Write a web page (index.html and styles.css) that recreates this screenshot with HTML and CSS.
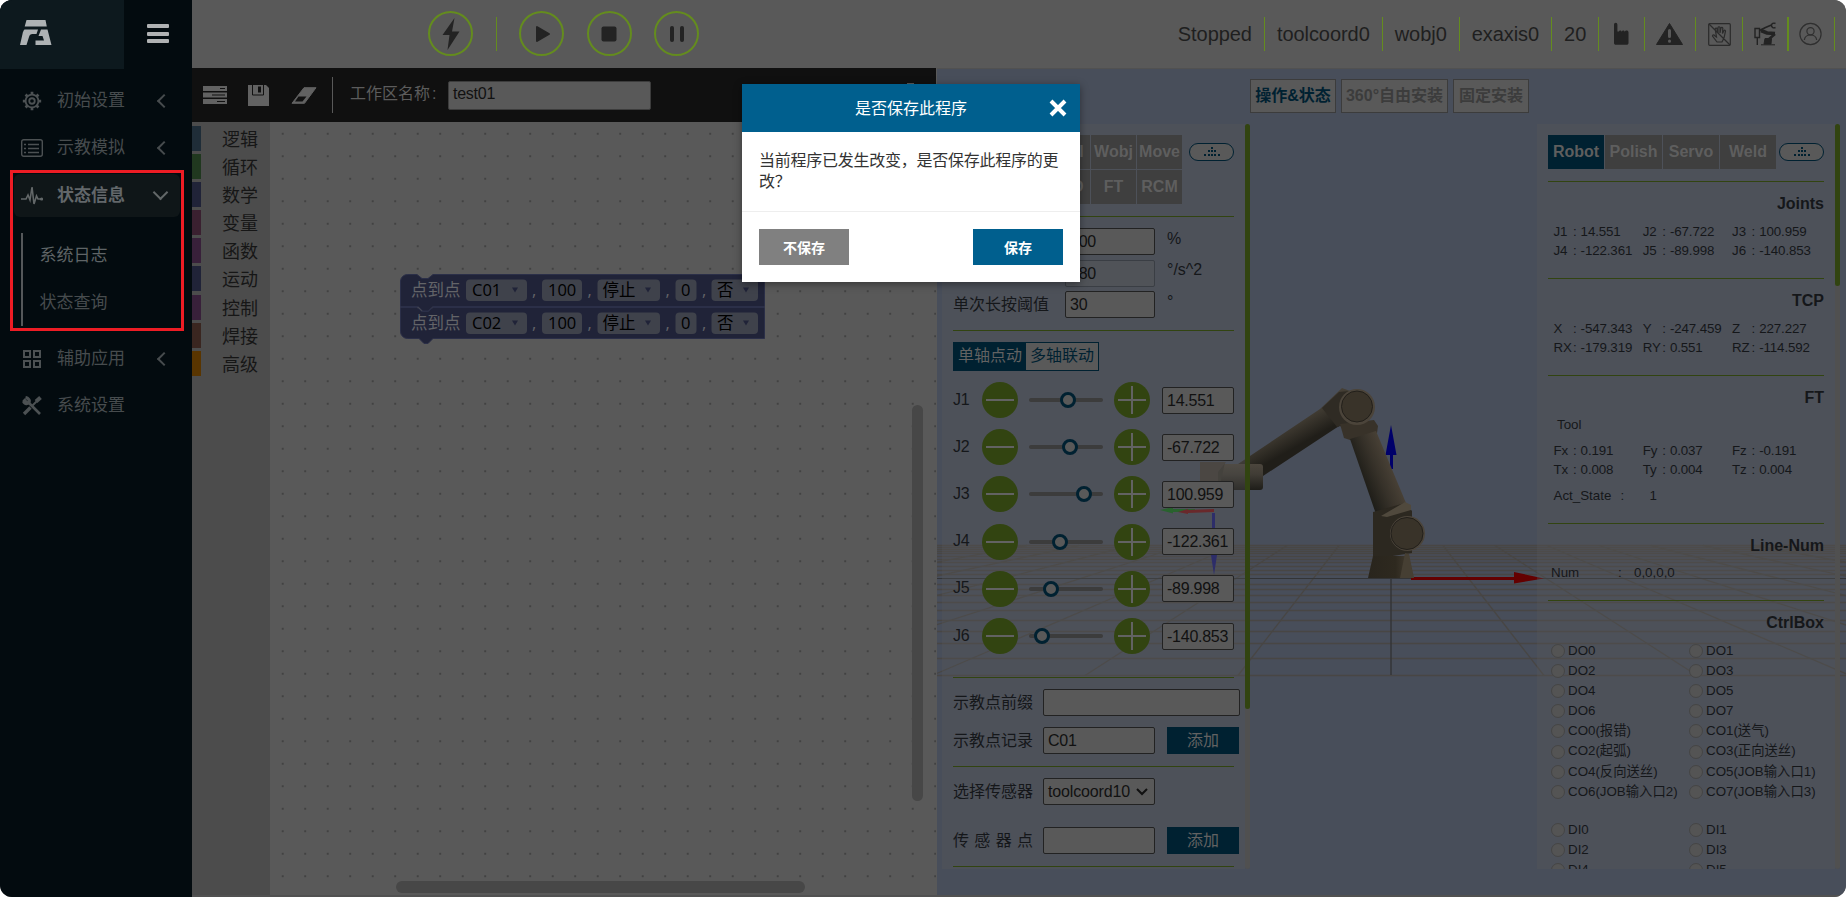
FILE: index.html
```
<!DOCTYPE html>
<html lang="zh-CN">
<head>
<meta charset="utf-8">
<title>test01</title>
<link rel="stylesheet" href="styles.css">
</head>
<body>
<div class="app">
  <aside class="sidebar">
    <div class="brand">
      <div class="logo"><svg width="32" height="26" viewBox="0 0 32 26" fill="#aeb2b4"><path d="M6.500 0h19l1.300 6.500H4.700zM4.500 9.500h13.500l-1.500 4.500h-4c-2 0-3 1-3.500 3L6.500 25H0l2.500-11c.4-2 1-3.500 2-4.500zM21 9.500h6.500L31.500 25H15.500v-4.500H24l-1.500-4.500h-4z"/></svg></div>
      <div class="burger"><i></i><i></i><i></i></div>
    </div>
    <nav class="menu">
      <div class="item"><svg width="22" height="22" viewBox="0 0 24 24" fill="none" stroke="#4c5153" stroke-width="2"><circle cx="12" cy="12" r="7"/><circle cx="12" cy="12" r="3"/><path stroke-width="3" d="M12 2v3M12 19v3M2 12h3M19 12h3M5 5l2 2M17 17l2 2M5 19l2-2M17 7l2-2"/></svg><span>初始设置</span><b class="chev"></b></div>
      <div class="item"><svg width="22" height="18" viewBox="0 0 22 18" fill="none" stroke="#4c5153" stroke-width="1.400"><rect x="0.700" y="0.700" width="20.600" height="16.600" rx="2"/><path d="M3 5.500h2M7 5.500h11M3 9.500h2M7 9.500h11M3 13.500h2M7 13.500h11"/></svg><span>示教模拟</span><b class="chev"></b></div>
      <div class="item active"><svg width="22" height="20" viewBox="0 0 22 20" fill="none" stroke="#626768" stroke-width="1.600"><path d="M0 13h5l2-4 2 5 2-13 2 17 2.500-8 1.500 3h4"/><circle cx="20.500" cy="13" r="0.800"/></svg><span>状态信息</span><b class="chev down"></b></div>
      <div class="sub"><div class="on">系统日志</div><div>状态查询</div></div>
      <div class="item"><svg width="20" height="20" viewBox="0 0 20 20" fill="none" stroke="#4c5153" stroke-width="2"><path d="M2 2h6v6H2zM12 2h6v6h-6zM2 12h6v6H2zM12 12h6v6h-6z"/></svg><span>辅助应用</span><b class="chev"></b></div>
      <div class="item"><svg width="20" height="20" viewBox="0 0 20 20" fill="none" stroke="#4c5153"><path stroke-width="2.600" d="M6 6l12 12"/><path stroke-width="3.200" d="M1.500 3.500l3 3M3.500 1.500C6 2 8 4 7 6S3 8.500 1.500 5"/><path stroke-width="2" d="M10.500 9.500L17 3"/><path stroke-width="4" d="M14 5.500l4.500-4"/><path stroke-width="3.400" d="M8.500 11.500L2 18"/></svg><span>系统设置</span></div>
    </nav>
  </aside>

  <div class="main">
    <header class="topbar">
      <div class="run">
        <div class="round"><svg width="20" height="34" viewBox="0 0 20 34" fill="#232323"><path d="M13.500 1L1.500 18h7L6.500 33l12-18.500h-7.500z"/></svg></div>
        <i class="sep"></i>
        <div class="round play"><svg width="20" height="20" viewBox="0 0 20 20" fill="#232323" stroke="#232323" stroke-width="2" stroke-linejoin="round"><path d="M5 3v14l12-7z"/></svg></div>
        <div class="round"><svg width="16" height="16"><rect width="15" height="15" x="0.500" y="0.500" rx="2" fill="#232323"/></svg></div>
        <div class="round"><svg width="16" height="18" fill="#232323"><rect x="1" y="1" width="4" height="16" rx="2"/><rect x="11" y="1" width="4" height="16" rx="2"/></svg></div>
      </div>
      <div class="status">
        <div>Stopped</div><div>toolcoord0</div><div>wobj0</div><div>exaxis0</div><div>20</div>
        <div class="ic w46"><svg width="18" height="24" viewBox="0 0 18 24" fill="#232323"><path d="M1 2.500a1.700 1.700 0 013.400 0V9.500H6c.2-1.300 2.300-1.300 2.500 0H9c.2-1.300 2.300-1.300 2.500 0h.5c.3-1.300 3.500-1.300 3.500.8V21c0 1-.8 1.800-1.800 1.800H2.800C1.800 22.800 1 22 1 21z"/></svg></div>
        <div class="ic w51"><svg width="28" height="25" viewBox="0 0 28 25"><path fill="#232323" stroke="#232323" stroke-linejoin="round" d="M13.500 1.500L26.500 22.500H.5z"/><path stroke="#595959" stroke-width="3" stroke-linecap="round" d="M13.500 8.500v6M13.500 19v.2"/></svg></div>
        <div class="ic w46"><svg width="23" height="23" viewBox="0 0 23 23" fill="none" stroke="#2b2b2b" stroke-width="1.200"><rect x="0.700" y="0.700" width="21.600" height="21.600" rx="1"/><path d="M1 1l21 21M9 19l-4.500-6c0-1.500 1.500-1.500 2.500 0l1.500 1L7.200 6c.3-1.200 1.600-1 1.800 0l1 4V4.500c.3-1 1.700-1 2 0V10l1-5c.4-1 1.700-.7 1.800.3l-.3 5.200 1.500-3c.5-.8 1.700-.3 1.500.7L16 15l-2 4z"/></svg></div>
        <div class="ic w46 thick"><svg width="24" height="24" viewBox="0 0 24 24" fill="none" stroke="#232323"><path stroke-width="1.400" d="M2 6.500h4.500v9H2zM4.300 16v7"/><path stroke-width="1.600" d="M6.500 8.500l6-3 6-2.500"/><path stroke-width="3.600" d="M8 8.500l6 2.500 8 .5"/><path stroke-width="2.400" d="M22 12l-6 5"/><path fill="#232323" d="M12 16.500h6.500l-.5 5.500h-7zM8 22.800h14"/><path stroke-width="1.400" d="M22.500 1.500c-2-1-4 .3-4 2s2 3 4 2"/></svg></div>
        <div class="ic w46"><svg width="24" height="24" viewBox="0 0 24 24" fill="none" stroke="#2f2f2f" stroke-width="1.200"><circle cx="11.500" cy="12" r="10.600"/><circle cx="11.500" cy="9.300" r="3.600"/><path d="M5.300 18c.5-3.300 3-5 6.200-5s5.700 1.700 6.200 5"/></svg></div>
      </div>
    </header>

    <div class="content">
      <section class="editor">
        <div class="tools">
          <svg width="24" height="18" viewBox="0 0 24 18"><path fill="#626262" d="M0 0h24v5H0zM0 6.500h24v5H0zM0 13h24v5H0z"/><path stroke="#111" d="M17 2.500h5M9 9h13M14 15.500h8"/></svg>
          <svg class="save" width="21" height="21" viewBox="0 0 21 21"><path fill="#626262" d="M0 0h18l3 3v18H0z"/><path fill="none" stroke="#111" d="M4.500 0v10h11V0"/><path fill="#111" d="M10 1.500h3v6h-3z"/></svg>
          <svg class="eraser" width="26" height="17" viewBox="0 0 26 17"><path fill="#626262" stroke="#626262" stroke-linejoin="round" d="M13 .7h12L13.500 16.300H1z"/><path fill="#111" d="M7.500 9.500h8l-4 5H4z"/></svg>
          <i class="bar"></i>
          <label>工作区名称<span>:</span></label>
          <div class="field">test01</div>
          <i class="nub"></i>
        </div>
        <div class="work">
          <div class="cats">
            <div class="c1">逻辑</div><div class="c2">循环</div><div class="c3">数学</div><div class="c4">变量</div><div class="c5">函数</div><div class="c3">运动</div><div class="c5">控制</div><div class="c8">焊接</div><div class="c9">高级</div>
          </div>
          <div class="canvas">
            <svg class="blocks" width="368" height="74" viewBox="400 272 368 74">
              <g fill="#202338" stroke="#2b2f48" stroke-width="1">
                <path d="M400.500 281a7 7 0 017-6.500H417l5 4h6l5-4h331.500v32H433l-5 4.500h-5l-5-4.500h-17.500z"/>
                <path d="M400.500 307.500H417l5 4h6l5-4h331.500v31H433l-5 5h-4l-5-5h-11.500a7 7 0 01-7-7z"/>
              </g>
              <g fill="#3f424b">
                <rect x="466" y="279.500" width="61" height="21.500" rx="4"/><rect x="542" y="279.500" width="40" height="21.500" rx="4"/><rect x="597.500" y="279.500" width="62.500" height="21.500" rx="4"/><rect x="675.500" y="279.500" width="21" height="21.500" rx="4"/><rect x="711.500" y="279.500" width="46.500" height="21.500" rx="4"/>
                <rect x="466" y="312.500" width="61" height="21.500" rx="4"/><rect x="542" y="312.500" width="40" height="21.500" rx="4"/><rect x="597.500" y="312.500" width="62.500" height="21.500" rx="4"/><rect x="675.500" y="312.500" width="21" height="21.500" rx="4"/><rect x="711.500" y="312.500" width="46.500" height="21.500" rx="4"/>
              </g>
              <path fill="#202338" d="M512 287.500h6l-3 5zM645 287.500h6l-3 5zM743 287.500h6l-3 5zM512 320.500h6l-3 5zM645 320.500h6l-3 5zM743 320.500h6l-3 5z"/>
              <g class="lbl"><text x="411" y="296">点到点</text><text x="532" y="296">,</text><text x="587.500" y="296">,</text><text x="665.500" y="296">,</text><text x="702" y="296">,</text><text x="411" y="329">点到点</text><text x="532" y="329">,</text><text x="587.500" y="329">,</text><text x="665.500" y="329">,</text><text x="702" y="329">,</text></g>
              <g class="val"><text x="472" y="296">C01</text><text x="548" y="296">100</text><text x="602.500" y="296">停止</text><text x="681" y="296">0</text><text x="717" y="296">否</text><text x="472" y="329">C02</text><text x="548" y="329">100</text><text x="602.500" y="329">停止</text><text x="681" y="329">0</text><text x="717" y="329">否</text></g>
            </svg>
            <i class="vbar"></i><i class="hbar"></i>
          </div>
        </div>
      </section>

      <section class="view">
        <svg class="scene" width="909" height="828" viewBox="937 69 909 828">
          <defs>
            <linearGradient id="upper" gradientUnits="userSpaceOnUse" x1="1278" y1="415" x2="1296" y2="447"><stop offset="0" stop-color="#4d463b"/><stop offset=".45" stop-color="#3f3a31"/><stop offset="1" stop-color="#201e19"/></linearGradient>
            <linearGradient id="fore" gradientUnits="userSpaceOnUse" x1="1360" y1="475" x2="1391" y2="462"><stop offset="0" stop-color="#1e1d18"/><stop offset=".5" stop-color="#363129"/><stop offset="1" stop-color="#4a4237"/></linearGradient>
            <linearGradient id="tube" x1="0" y1="0" x2="0" y2="1"><stop offset="0" stop-color="#4c463d"/><stop offset=".4" stop-color="#403c35"/><stop offset="1" stop-color="#1e1d19"/></linearGradient>
            <linearGradient id="base" x1="0" y1="0" x2="1" y2="0"><stop offset="0" stop-color="#29251d"/><stop offset=".6" stop-color="#2e291f"/><stop offset="1" stop-color="#4a4236"/></linearGradient>
          </defs>
          <g stroke="#484644" stroke-width="1.300" fill="none">
            <path d="M937 545.500h909M937 547.500h909M937 549.500h909M937 551.500h909M937 553.500h909M937 556.500h909M937 559.500h909M937 562.500h909M937 566.500h909M937 570.500h909M937 574.500h909M937 584.500h909M937 589.500h909M937 595.500h909M937 602.500h909M937 610.500h909M937 620.500h909M937 631.500h909M937 643.500h909M937 658.500h909M937 675.500h909"/>
            <path d="M1339 545.500L1238 675.500M1287 545.500L1085 675.500M1235 545.500L932 675.500M1183 545.500L779 675.500M1131 545.500L626 675.500M1079 545.500L473 675.500M1027 545.500L320 675.500M1443 545.500L1544 675.500M1495 545.500L1697 675.500M1547 545.500L1850 675.500M1599 545.500L2003 675.500M1651 545.500L2156 675.500M1703 545.500L2309 675.500M1755 545.500L2462 675.500"/>
          </g>
          <path fill="#333436" d="M937 578h909v1H937zM1390.300 579h1.400v96h-1.400z"/>
          <path fill="#00006a" d="M1391 425l5.500 30H1393v14h-3v-14h-4.500z"/>
          <path fill="#640000" d="M1411 577h103v-5l30 6.500-30 5v-3.500h-103z"/>
          <path fill="url(#upper)" d="M1238 464L1320 409l22-21 22 8-10 22-18 10-76 50z"/>
          <rect x="1214" y="464" width="49" height="26" rx="3" fill="url(#tube)"/>
          <path fill="#3c3832" d="M1200 462h25l-6 28h-19z"/>
          <path fill="#45403a" d="M1200 462h26l-8 10v18h-18z"/>
          <path fill="#2f2b24" d="M1322 408l17-16 10-1v40l-9-5-3 1z"/>
          <path fill="#383229" d="M1340 424l34-4 4 6-1 7-27 7-6-2z"/>
          <path fill="url(#fore)" d="M1350 439l26-8 30 72-4 12-25 2z"/>
          <path fill="#2c2820" d="M1373 512l32-9 7 8v42l-39 6z"/>
          <path fill="#50493d" d="M1381 516l24-14 6 3v5l-24 7z"/>
          <path fill="url(#base)" d="M1373 556h35l6 22h-46z"/>
          <path fill="#463f33" d="M1405 553l4 1 5 24h-14z"/>
          <circle cx="1357" cy="407" r="18" fill="#4b443a"/><circle cx="1357" cy="406.500" r="15.500" fill="#393329" stroke="#221f1a"/>
          <circle cx="1407.500" cy="533.500" r="17.500" fill="#4b443a"/><circle cx="1407" cy="533.500" r="16" fill="#393329" stroke="#221f1a"/>
          <path fill="#15661c" d="M1160 510l13-3v2h22v3h-22v1.500z"/>
          <path fill="#701518" d="M1178 512l10-3v1l26-1v3l-26 1v1z"/>
          <path fill="#1b1b70" d="M1212 513h3v42h2l-3 20-3-20h1z"/>
        </svg>
        <div class="modes"><div class="sel">操作&amp;状态</div><div>360°自由安装</div><div>固定安装</div></div>

        <div class="panel left">
          <div class="body">
            <div class="tabrow"><div class="grid5"><div>Joint</div><div>Base</div><div>Tool</div><div>Wobj</div><div>Move</div><div>I/O</div><div>EAxis</div><div>TPD</div><div>FT</div><div>RCM</div></div><div class="pill"><svg width="18" height="10" viewBox="0 0 18 10" fill="#002131"><path d="M8 0h2v2H8zM5 3h2v2H5zM8 3h2v2H8zM11 3h2v2h-2zM1 7h2v2H1zM5 7h2v2H5zM8 7h2v2H8zM11 7h2v2h-2zM15 7h2v2h-2z"/></svg></div></div>
            <div class="sec s1">
              <div class="line"><label>速度</label><div class="field">100</div><em>%</em></div>
              <div class="line"><label>加速度</label><div class="field dim">180</div><em>°/s^2</em></div>
              <div class="line"><label>单次长按阈值</label><div class="field">30</div><em>°</em></div>
            </div>
            <div class="sec s2">
              <div class="seg"><div class="on">单轴点动</div><div>多轴联动</div></div>
              <div class="joint"><label>J1</label><i class="knob"></i><div class="track"><u style="left:31px"></u></div><i class="knob plus"></i><div class="field">14.551</div></div>
              <div class="joint"><label>J2</label><i class="knob"></i><div class="track"><u style="left:33px"></u></div><i class="knob plus"></i><div class="field">-67.722</div></div>
              <div class="joint"><label>J3</label><i class="knob"></i><div class="track"><u style="left:47px"></u></div><i class="knob plus"></i><div class="field">100.959</div></div>
              <div class="joint"><label>J4</label><i class="knob"></i><div class="track"><u style="left:23px"></u></div><i class="knob plus"></i><div class="field">-122.361</div></div>
              <div class="joint"><label>J5</label><i class="knob"></i><div class="track"><u style="left:14px"></u></div><i class="knob plus"></i><div class="field">-89.998</div></div>
              <div class="joint"><label>J6</label><i class="knob"></i><div class="track"><u style="left:5px"></u></div><i class="knob plus"></i><div class="field">-140.853</div></div>
            </div>
            <div class="sec s3">
              <div class="line"><label>示教点前缀</label><div class="field wide"></div></div>
              <div class="line"><label>示教点记录</label><div class="field">C01</div><div class="add">添加</div></div>
            </div>
            <div class="sec s4">
              <div class="line"><label>选择传感器</label><div class="field pick">toolcoord10<svg width="12" height="8" viewBox="0 0 12 8" fill="none" stroke="#111" stroke-width="2"><path d="M1 1l5 5 5-5"/></svg></div></div>
              <div class="line"><label class="spread"><span>传</span><span>感</span><span>器</span><span>点</span></label><div class="field"></div><div class="add">添加</div></div>
            </div>
            <div class="sec"></div>
          </div>
          <div class="scroll"><i></i></div>
        </div>

        <div class="panel right">
          <div class="body">
            <div class="tabrow"><div class="grid4"><div class="on">Robot</div><div>Polish</div><div>Servo</div><div>Weld</div></div><div class="pill"><svg width="18" height="10" viewBox="0 0 18 10" fill="#002131"><path d="M8 0h2v2H8zM5 3h2v2H5zM8 3h2v2H8zM11 3h2v2h-2zM1 7h2v2H1zM5 7h2v2H5zM8 7h2v2H8zM11 7h2v2h-2zM15 7h2v2h-2z"/></svg></div></div>
            <div class="sec t1"><h3>Joints</h3>
              <div class="nums"><div><b>J1</b>:<span>14.551</span></div><div><b>J2</b>:<span>-67.722</span></div><div><b>J3</b>:<span>100.959</span></div><div><b>J4</b>:<span>-122.361</span></div><div><b>J5</b>:<span>-89.998</span></div><div><b>J6</b>:<span>-140.853</span></div></div></div>
            <div class="sec t1"><h3>TCP</h3>
              <div class="nums"><div><b>X</b>:<span>-547.343</span></div><div><b>Y</b>:<span>-247.459</span></div><div><b>Z</b>:<span>227.227</span></div><div><b>RX</b>:<span>-179.319</span></div><div><b>RY</b>:<span>0.551</span></div><div><b>RZ</b>:<span>-114.592</span></div></div></div>
            <div class="sec t3"><h3>FT</h3><p class="tool">Tool</p>
              <div class="nums"><div><b>Fx</b>:<span>0.191</span></div><div><b>Fy</b>:<span>0.037</span></div><div><b>Fz</b>:<span>-0.191</span></div><div><b>Tx</b>:<span>0.008</span></div><div><b>Ty</b>:<span>0.004</span></div><div><b>Tz</b>:<span>0.004</span></div></div>
              <p class="act"><span>Act_State</span><span>:</span><span>1</span></p></div>
            <div class="sec t4"><h3>Line-Num</h3><p class="act num"><span>Num</span><span>:</span><span>0,0,0,0</span></p></div>
            <div class="sec t5"><h3>CtrlBox</h3>
              <div class="io"><div>DO0</div><div>DO1</div><div>DO2</div><div>DO3</div><div>DO4</div><div>DO5</div><div>DO6</div><div>DO7</div><div>CO0(报错)</div><div>CO1(送气)</div><div>CO2(起弧)</div><div>CO3(正向送丝)</div><div>CO4(反向送丝)</div><div>CO5(JOB输入口1)</div><div>CO6(JOB输入口2)</div><div>CO7(JOB输入口3)</div></div>
              <div class="io di"><div>DI0</div><div>DI1</div><div>DI2</div><div>DI3</div><div>DI4</div><div>DI5</div></div></div>
          </div>
          <div class="scroll"><i></i></div>
        </div>
      </section>
    </div>
  </div>

  <div class="highlight"></div>
  <div class="dialog">
    <div class="head"><span>是否保存此程序</span><svg width="18" height="18" viewBox="0 0 18 18" stroke="#fff" stroke-width="4"><path d="M2 2l14 14M16 2L2 16"/></svg></div>
    <p>当前程序已发生改变，是否保存此程序的更<br>改？</p>
    <div class="foot"><button>不保存</button><button class="ok">保存</button></div>
  </div>
</div>
</body>
</html>
```
FILE: styles.css
```
* { box-sizing: border-box; }
html { background: #fff; }
body { margin: 0; font-family: "Liberation Sans", "Noto Sans CJK SC", sans-serif; font-size: 16px; color: #15171a; }
i, em { font-style: normal; }
i { display: block; flex: none; }
svg { display: block; flex: none; }
p, h3 { margin: 0; }
.app { position: relative; display: flex; width: 1846px; height: 897px; border-radius: 12px; overflow: hidden; background: #595959; }

/* sidebar */
.sidebar { width: 192px; background: #030b0f; flex: none; }
.brand { display: flex; height: 69px; }
.logo { width: 124px; background: #0d191e; padding: 20px 0 0 20px; }
.burger { padding: 24px 0 0 23px; display: flex; flex-direction: column; gap: 3.5px; }
.burger i { width: 22px; height: 4px; border-radius: 1px; background: #b0b2b3; }
.menu { padding-top: 8px; }
.item { display: flex; align-items: center; height: 47px; margin-left: 14px; width: 166px; padding: 0 9px 0 0; color: #474c4e; font-size: 17px; line-height: 24px; border-radius: 6px; }
.item svg { width: 22px; margin: 0 14px 0 7px; }
.item .chev { margin-left: auto; margin-right: 2px; width: 10px; height: 10px; border-left: 2px solid #474c4e; border-bottom: 2px solid #474c4e; transform: rotate(45deg); }
.item.active { height: 43px; background: #0f1618; color: #62676a; font-weight: bold; margin-top: 3px; }
.item .chev.down { transform: translate(-3px, -3px) rotate(-45deg); border-color: #626768; width: 11px; height: 11px; }
.sub { margin: 16px 0 9px 21px; height: 93px; border-left: 2px solid #55585a; padding-left: 16.5px; font-size: 17px; color: #474c4e; line-height: 47px; }
.sub div { height: 47px; }
.sub .on { color: #5f6466; height: 46px; line-height: 46px; }
.highlight { position: absolute; left: 10px; top: 170px; width: 174px; height: 161px; border: 3px solid #ed1c24; }

/* top bar */
.main { flex: 1; display: flex; flex-direction: column; min-width: 0; }
.topbar { height: 68px; display: flex; justify-content: space-between; background: #595959; }
.run { display: flex; align-items: center; padding-left: 236px; height: 67px; }
.round { width: 45px; height: 45px; border: 2px solid #648c1e; border-radius: 50%; display: flex; align-items: center; justify-content: center; margin-right: 22.5px; }
.sep { width: 1px; height: 34px; background: #648c1e; margin-right: 22.5px; }
.status { display: flex; height: 34px; margin-top: 17px; margin-right: 11px; font-size: 20px; line-height: 34px; color: #1f1f1f; letter-spacing: -0.06px; }
.status > div { border-right: 1px solid #648c1e; padding: 0 12px; }
.status .ic { padding: 0; display: flex; align-items: center; justify-content: center; }
.status .w46 { width: 46.2px; }
.status .w51 { width: 51px; }
.status .thick { border-right-width: 2px; }

.content { display: flex; height: 829px; border-bottom: 2px solid #515151; }

/* editor */
.editor { width: 745px; flex: none; display: flex; flex-direction: column; border-right: 1px solid #595959; }
.tools { height: 54px; background: #101010; display: flex; align-items: center; padding-left: 11px; color: #5c5c5c; position: relative; }
.save { margin-left: 21px; }
.eraser { margin-left: 22px; }
.bar { width: 1px; height: 36px; background: #595959; margin: 0 17px 0 15px; }
.tools label { line-height: 24px; width: 98px; white-space: nowrap; margin-top: -2px; }
.tools label span { margin-left: 2px; }
.field { height: 27px; border: 1px solid #222; border-radius: 2px; background: #595959; color: #111; padding: 0 0 0 4px; line-height: 25px; font-size: 16px; letter-spacing: -0.25px; white-space: nowrap; }
.tools .field { width: 203px; height: 29px; line-height: 24px; border-color: #3c3c3c; }
.nub { position: absolute; left: 715px; top: 15px; width: 7px; height: 2px; background: #595959; }
.work { display: flex; flex: 1; }
.cats { width: 78px; background: #4c4c4c; padding-top: 4px; }
.cats div { height: 25px; margin-bottom: 3.1px; border-left: 9px solid; padding-left: 21px; font-size: 18px; line-height: 29px; white-space: nowrap; color: #161616; }
.cats .c1 { border-left-color: #1f2d38; }
.cats .c2 { border-left-color: #20381f; }
.cats .c3 { border-left-color: #202338; }
.cats .c4 { border-left-color: #3a2030; }
.cats .c5 { border-left-color: #38203a; }
.cats .c8 { border-left-color: #3a2620; }
.cats .c9 { border-left-color: #593500; }
.canvas { position: relative; flex: 1; background: radial-gradient(circle at 12.7px 12px, #424242 0.9px, transparent 1.3px) 0 0 / 22.5px 22.5px; }
.blocks { position: absolute; left: 130px; top: 150px; }
.blocks text { font-family: "Open Sans", "Noto Sans CJK SC", sans-serif; font-size: 16.5px; }
.lbl { fill: #636468; }
.val { fill: #000; }
.vbar { position: absolute; left: 642px; top: 283px; width: 11px; height: 396px; border-radius: 6px; background: #474747; }
.hbar { position: absolute; left: 126px; top: 759px; width: 409px; height: 12px; border-radius: 6px; background: #474747; }

/* 3D view with side panels */
.view { position: relative; flex: 1; background: #484e5a; display: flex; justify-content: space-between; padding: 56px 6px 0 5px; border-top: 1px solid #515151; }
.scene { position: absolute; left: 0; top: 0; }
.modes { position: absolute; left: 313px; top: 10px; display: flex; gap: 5px; font-weight: bold; color: #3c3c3c; line-height: 30px; white-space: nowrap; }
.modes div { border: 1px solid #3c3c3c; background: #595959; padding: 1px 0; height: 34px; width: 76px; text-align: center; font-size: 16px; }
.modes div:nth-child(1) { width: 86px; }
.modes div:nth-child(2) { width: 107px; }
.modes .sel { color: #002131; }
.panel { position: relative; height: 745px; margin-top: -1px; display: flex; overflow: hidden; }
.body { background: rgba(89,89,89,.3); padding: 11px 0 0 11px; }
.left .body { width: 303px; }
.right .body { width: 298px; }
.scroll { width: 5px; background: #505050; border-radius: 3px; }
.scroll i { width: 5px; border-radius: 3px; background: #324411; height: 585px; }
.right .scroll i { height: 162px; }
.tabrow { display: flex; height: 81px; }
.grid5 { display: grid; grid-template-columns: repeat(5, 45px); gap: 1px; height: 69px; width: 229px; }
.grid4 { display: grid; grid-template-columns: 56px 57px 56px 56px; gap: 1px; height: 34px; width: 228px; }
.grid5 div, .grid4 div { background: #3f3f3f; color: #5e5e5e; font-weight: bold; height: 34px; line-height: 33px; text-align: center; overflow: hidden; }
.grid4 .on { background: #002131; color: #5e5e5e; }
.left .pill { margin-left: 7px; }
.right .pill { margin-left: 3px; }
.pill { width: 45px; height: 18px; border: 1.5px solid #002131; border-radius: 9px; background: #595959; margin-top: 8px; display: flex; align-items: center; justify-content: center; }
.left .sec { width: 281px; }
.sec { width: 276px; border-top: 1px solid #324411; }
.right .tabrow { height: 46px; }
.line { display: flex; height: 27px; align-items: center; }
.line label { width: 112px; line-height: 24px; white-space: nowrap; }
.s1 .field { width: 90px; }
.s1 em { margin: -6px 0 0 12px; }
.s1 .dim { background: #505358; border-color: #3a3e44; }
.s1 { height: 114px; padding-top: 11px; display: flex; flex-direction: column; gap: 4.6px; }
.s2 { height: 347px; padding-top: 11px; }
.seg { display: flex; width: 146px; height: 29px; border: 1px solid #002131; margin-bottom: 5.5px; line-height: 26px; text-align: center; }
.seg div { width: 73px; background: #595959; color: #002131; }
.seg .on { background: #002131; color: #626262; }
.joint { display: flex; align-items: center; height: 47.2px; }
.joint label { width: 29px; margin-top: -1px; letter-spacing: -0.2px; }
.knob { position: relative; width: 36px; height: 36px; border-radius: 50%; background: linear-gradient(#626262, #626262) center / 28px 2px no-repeat #324411; }
.plus { background: linear-gradient(#626262, #626262) center / 28px 2px no-repeat, linear-gradient(#626262, #626262) center / 2px 28px no-repeat #324411; }
.track { position: relative; width: 74px; height: 4px; border-radius: 2px; background: #3c3c3c; margin: 0 11px; }
.track u { position: absolute; top: -6px; width: 16px; height: 16px; border-radius: 50%; border: 3px solid #002131; background: #595959; }
.joint .field { width: 72px; margin-left: 12px; }
.s3 { height: 89px; padding-top: 11px; display: flex; flex-direction: column; gap: 11px; }
.s4 { height: 100px; padding-top: 11px; display: flex; flex-direction: column; gap: 22px; }
.s3 label, .s4 label { width: 90px; flex: none; }
.s3 .field, .s4 .field { width: 112px; flex: none; }
.s3 .wide { width: 197px; }
.s4 .spread { display: flex; justify-content: space-between; width: 80px; margin-right: 10px; }
.add { width: 72px; height: 27px; margin-left: 12px; background: #002131; color: #626262; text-align: center; line-height: 27px; flex: none; }
.s4 .pick { display: flex; align-items: center; gap: 6px; letter-spacing: -0.15px; }

/* readings */
h3 { font-size: 16px; line-height: 22px; height: 20px; text-align: right; }
.right .sec { padding-top: 11px; font-size: 13.33px; }
.t1 { height: 97px; }
.t3 { height: 148px; }
.t4 { height: 77px; }
.nums { display: grid; grid-template-columns: 89.3px 89.3px 89.3px; padding-left: 5.5px; line-height: 19px; margin-top: 8.5px; white-space: nowrap; letter-spacing: -0.12px; }
.nums div { display: flex; }
.nums b { font-weight: normal; width: 19.5px; }
.nums span { margin-left: 4px; }
.tool { padding-left: 9px; line-height: 19px; margin-top: 8px; }
.t3 .nums { margin-top: 7px; }
.act { display: flex; padding-left: 5.5px; line-height: 19px; margin-top: 7px; }
.act span:first-child { width: 67px; }
.act span:nth-child(2) { width: 29px; }
.num { padding-left: 3px; margin-top: 8px; }
.num span:nth-child(2) { width: 16px; }
.io { display: grid; grid-template-columns: 138px 138px; line-height: 20.2px; margin: 8.5px 0 0 3px; white-space: nowrap; }
.io div { display: flex; align-items: center; height: 20.2px; gap: 3px; }
.io div::before { content: ""; width: 12px; height: 12px; border-radius: 50%; border: 1px solid #454545; background: #545454; flex: none; }
.di { margin-top: 18px; }

/* dialog */
.dialog { position: absolute; left: 742px; top: 84px; width: 338px; height: 198px; background: #fff; color: #333; box-shadow: 0 2px 8px rgba(0,0,0,.4); }
.head { height: 48px; background: #005f8e; color: #fff; display: flex; align-items: center; justify-content: center; position: relative; line-height: 24px; padding-top: 2px; }
.head svg { position: absolute; right: 13px; top: 15px; }
.dialog p { height: 79px; padding: 18px 0 0 17px; line-height: 21px; letter-spacing: -0.25px; white-space: nowrap; }
.foot { border-top: 1px solid #eee; padding: 17px 17px 0; display: flex; justify-content: space-between; }
.foot button { width: 90px; height: 36px; border: 0; padding: 0; background: #808080; color: #fff; font: bold 14px "Liberation Sans", "Noto Sans CJK SC", sans-serif; }
.foot .ok { background: #005f8e; }
```
